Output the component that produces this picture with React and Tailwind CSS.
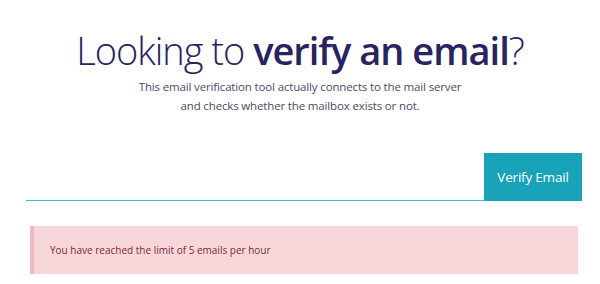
export default function App() {
  return (
    <div className="w-[600px] h-[284px] bg-white overflow-hidden" style={{ fontFamily: '"Open Sans", "Noto Sans", sans-serif' }}>
      <h1 className="h-[73px] pt-[27px] text-center text-[38px] leading-[46px] text-[#27245f] font-light tracking-[-1px]">
        Looking to <span className="font-semibold">verify an email</span>?
      </h1>
      <div className="h-[42px] pt-[4px] text-center text-[11.5px] leading-[19px] text-[#4b4a68] tracking-[-0.15px]">
        <p>This email verification tool actually connects to the mail server</p>
        <p>and checks whether the mailbox exists or not.</p>
      </div>
      <div className="mt-[38px] ml-[26px] mr-[18px] h-[48px] flex items-stretch">
        <div className="flex-1 flex flex-col justify-end">
          <div className="h-[1px] bg-[#3fbcd0]"></div>
        </div>
        <button className="w-[98px] h-[48px] bg-[#18a3b8] text-white text-[13.5px] tracking-[-0.2px] flex items-center justify-center">
          Verify Email
        </button>
      </div>
      <div className="mt-[25px] ml-[30px] mr-[22px] h-[48px] bg-[#f8d7da] border-l-4 border-[#f2b9bf] flex items-center pl-[16px]">
        <span className="text-[10px] text-[#7a2a35]">You have reached the limit of 5 emails per hour</span>
      </div>
    </div>
  );
}
